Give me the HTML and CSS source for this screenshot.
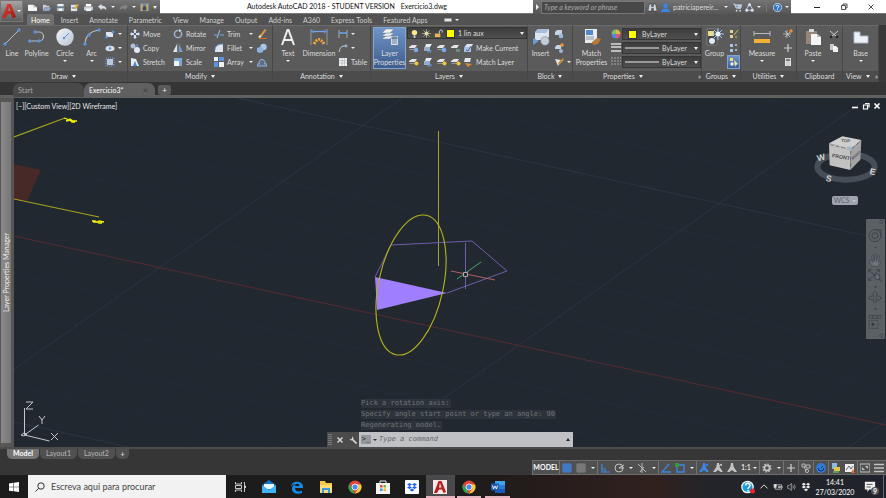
FILE: index.html
```html
<!DOCTYPE html>
<html lang="en">
<head>
<meta charset="utf-8">
<title>Autodesk AutoCAD 2018 - STUDENT VERSION</title>
<link rel="stylesheet" href="styles.css">
</head>
<body>
<svg class="defs" aria-hidden="true">
  <linearGradient id="ball" x1="0" y1="0" x2="1" y2="1"><stop offset="0" stop-color="#f2f5f9"/><stop offset="1" stop-color="#b9c3d3"/></linearGradient>
  <linearGradient id="red" x1="0" y1="0" x2="1" y2="1"><stop offset="0" stop-color="#e8443d"/><stop offset="1" stop-color="#a5120f"/></linearGradient>
  <symbol id="new" viewBox="0 0 10 10"><path d="M0 2h6l4 3V9H0z" fill="#f4f4f4"/><path d="M6 2v3h3" fill="#bbb"/></symbol>
  <symbol id="open" viewBox="0 0 10 10"><path d="M1 2h3l1 1h3v2H3L1 8z" fill="#c9cdd3"/><path d="M3 5h7L8 9H1z" fill="#8fa5c0"/></symbol>
  <symbol id="save" viewBox="0 0 10 10"><path d="M1 1h8v8H1z" fill="#9eb2ca"/><path d="M2 1h6v3H2zM3 6h4v3H3z" fill="#f1f1f1"/><path d="M1 4h8v1H1z" fill="#34465c"/></symbol>
  <symbol id="saveas" viewBox="0 0 10 10"><path d="M1 2h7v7H1z" fill="#dfe4ea"/><path d="M2 5h5v1H2z" fill="#50647c"/><path d="M4 6l4-5 2 1-4 5z" fill="#e8a23c"/></symbol>
  <symbol id="print" viewBox="0 0 10 10"><path d="M2 1h6v3H2z" fill="#fff"/><path d="M0 4h10v4H0z" fill="#c6cbd2"/><path d="M2 6h6v3H2z" fill="#edf2f8"/></symbol>
  <symbol id="undo" viewBox="0 0 10 10"><path d="M0 4l4-3v2c4 0 6 2 5 5-1-2-2-2-5-2v2z" fill="#d7dde5"/></symbol>
  <symbol id="redo" viewBox="0 0 10 10"><path d="M10 4L6 1v2C2 3 0 5 1 8c1-2 2-2 5-2v2z" fill="#858585"/></symbol>
  <symbol id="work" viewBox="0 0 10 10"><path d="M0 0h10v9H0z" fill="#7289a5"/><path d="M1 1h2v8H1zM7 1h2v8H7z" fill="#d3a54c"/><path d="M3 8V5l2-2 2 2v3" fill="#3f4e62"/></symbol>
  <symbol id="bino" viewBox="0 0 10 10"><path d="M1 3l1-2h2v3h2V1h2l1 2 1 6H6V6H4v3H0z" fill="#cfd5dd" stroke="#222" stroke-width=".5"/></symbol>
  <symbol id="user" viewBox="0 0 10 10"><circle cx="5" cy="3" r="2.500" fill="#3f83e6"/><path d="M0 10c0-3 2-4 5-4s5 1 5 4z" fill="#3d83e3"/></symbol>
  <symbol id="cart" viewBox="0 0 10 10"><path d="M0 1h2l2 5h5M2 2h8L9 5H3z" fill="#b4cbe8" stroke="#c9d9ec" stroke-width=".7"/><circle cx="4" cy="8.500" r="1" fill="#ddd"/><circle cx="8" cy="8.500" r="1" fill="#ddd"/></symbol>
  <symbol id="a360" viewBox="0 0 10 10"><path d="M5 1L1 8h8z" fill="none" stroke="#a9bddb" stroke-width="1.200"/><g fill="#d5dfee"><circle cx="5" cy="2" r="1.700"/><circle cx="2" cy="8" r="1.700"/><circle cx="8" cy="8" r="1.700"/></g></symbol>
  <symbol id="help" viewBox="0 0 10 10"><circle cx="5" cy="5" r="4.600" fill="#3271c4" stroke="#eee" stroke-width=".8"/><path d="M3.500 4c0-2 3-2 3 0 0 1-1.500 1-1.500 2.300M5 7v1" fill="none" stroke="#fff" stroke-width="1.100"/></symbol>
  <symbol id="line" viewBox="0 0 18 18"><path d="M2 16L16 2" stroke="#b9bec6"/><g fill="#5d93dd"><circle cx="2" cy="16" r="1.700"/><circle cx="16" cy="2" r="1.700"/></g></symbol>
  <symbol id="poly" viewBox="0 0 18 18"><path d="M1 13h10a4.500 4.500 0 0 0 0-9H7" fill="none" stroke="#b9bec6" stroke-width="1.200"/><g fill="#5d93dd"><circle cx="1.700" cy="13" r="1.700"/><circle cx="11" cy="13" r="1.700"/><circle cx="7" cy="4" r="1.700"/></g></symbol>
  <symbol id="circ" viewBox="0 0 18 18"><circle cx="9" cy="9" r="8.700" fill="url(#ball)"/><path d="M8 10l5-5" stroke="#5d93dd"/><circle cx="8" cy="10" r="1.200" fill="#5d93dd"/></symbol>
  <symbol id="arc" viewBox="0 0 18 18"><path d="M2 17Q2 4 16 2" fill="none" stroke="#b9bec6" stroke-width="1.200"/><g fill="#5d93dd"><circle cx="2" cy="16" r="1.700"/><circle cx="6" cy="7" r="1.700"/><circle cx="16" cy="2" r="1.700"/></g></symbol>
  <symbol id="rect" viewBox="0 0 10 10"><path d="M1 3h7v5H1z" fill="#dfe5ee"/><circle cx="8" cy="3" r="1.500" fill="#5d93dd"/><circle cx="1.500" cy="8" r="1.500" fill="#5d93dd"/></symbol>
  <symbol id="ell" viewBox="0 0 10 10"><ellipse cx="5" cy="5.500" rx="4.500" ry="2.700" fill="#d9e0ea"/><circle cx="5" cy="5.500" r="1.200" fill="#5d93dd"/><circle cx="5" cy="2.500" r="1" fill="#5d93dd"/></symbol>
  <symbol id="hatch" viewBox="0 0 10 10"><path d="M1 1h8v8H1z" fill="none" stroke="#79a4dd" stroke-dasharray="1 1"/><path d="M2 2h6v6H2z" fill="#b8c7dc"/></symbol>
  <symbol id="move" viewBox="0 0 10 10"><path d="M5 0l2 2H6v2h2V3l2 2-2 2V6H6v2h1l-2 2-2-2h1V6H2v1L0 5l2-2v1h2V2H3z" fill="#d5e2f2"/><path d="M4 4h2v2H4z" fill="#4f5f74"/></symbol>
  <symbol id="copy" viewBox="0 0 10 10"><circle cx="3" cy="3" r="2.500" fill="#aebfd6"/><circle cx="7" cy="7" r="3" fill="#e3eaf3"/><circle cx="7" cy="2.500" r="1.200" fill="#5d93dd"/></symbol>
  <symbol id="stretch" viewBox="0 0 10 10"><path d="M1 1l5 1 3 7H1z" fill="#e6ebf2"/><path d="M3 9l2-5 2 5z" fill="#4687d4"/></symbol>
  <symbol id="rotate" viewBox="0 0 10 10"><circle cx="5" cy="5" r="3.600" fill="none" stroke="#9fb6d3" stroke-width="1.500" stroke-dasharray="17 3"/><path d="M6 0l3 2-3 1z" fill="#d9e2ee"/></symbol>
  <symbol id="mirror" viewBox="0 0 10 10"><path d="M4 1v8H0z" fill="#e0e5ed"/><path d="M6 1v8h4z" fill="#6c9bd4"/><path d="M5 0v10" stroke="#aaa" stroke-width=".5"/></symbol>
  <symbol id="scale" viewBox="0 0 10 10"><path d="M1 1h8v8H1z" fill="#80a6d6"/><path d="M1 4h5v5H1z" fill="#eef2f7"/></symbol>
  <symbol id="trim" viewBox="0 0 10 10"><path d="M0 6h3m3 0h4" stroke="#7aa7df" stroke-width="1.200"/><path d="M6 1L3 9" stroke="#8cb1e0" stroke-width="1.200"/></symbol>
  <symbol id="fillet" viewBox="0 0 10 10"><path d="M1 9V6q1-5 8-5v8z" fill="#dfe5ed"/><path d="M1 7q0-6 8-6" fill="none" stroke="#6b9cda"/></symbol>
  <symbol id="array" viewBox="0 0 10 10"><path d="M0 0h4v4H0zM5 5h5v5H5z" fill="#eaf1f9"/><path d="M5 0h5v4H5zM0 5h4v5H0z" fill="#5d93dd"/></symbol>
  <symbol id="erase" viewBox="0 0 10 10"><path d="M3 6l5-6 1.500 1L5 7z" fill="#e4963a"/><path d="M1 8l2-2 2 1-2 2z" fill="#efe3c7"/><path d="M2 9.500h8" stroke="#d66b32"/></symbol>
  <symbol id="explode" viewBox="0 0 10 10"><circle cx="6.500" cy="4" r="3.200" fill="#a9c6e8"/><path d="M0 5l3-1 3 1v4l-3 1-3-1z" fill="#8eb3e0"/></symbol>
  <symbol id="offset" viewBox="0 0 10 10"><path d="M0 9V7h2.500a3 3 0 1 1 5 0H10v2z" fill="#5f7086" stroke="#8fb0dc"/></symbol>
  <symbol id="dim" viewBox="0 0 18 18"><path d="M1 1v16M17 1v16" stroke="#a5a8ad" stroke-width=".8"/><path d="M1 3.500h16" stroke="#78a6e2" stroke-width="1.300"/><path d="M1 3.500l3-2v4zM17 3.500l-3-2v4z" fill="#5d93dd"/><path d="M4 16q5-9 10 0" fill="none" stroke="#f0a43a" stroke-width="3" stroke-dasharray="2 1"/></symbol>
  <symbol id="dimlin" viewBox="0 0 10 10"><path d="M1 1v8M9 1v8" stroke="#aaa"/><path d="M1 4h8" stroke="#6ca0e2" stroke-width="1.600"/></symbol>
  <symbol id="leader" viewBox="0 0 10 10"><path d="M1 9q1-6 5-6h3" fill="none" stroke="#c5cbd4"/><circle cx="8" cy="3" r="1.400" fill="#8eb3e0"/></symbol>
  <symbol id="table" viewBox="0 0 10 10"><path d="M1 1h8v8H1z" fill="#eee"/><path d="M1 3.500h8M1 6h8M4 1v8M6.500 1v8" stroke="#a3a8b0" stroke-width=".5"/></symbol>
  <symbol id="layers" viewBox="0 0 18 18"><g stroke="#657f9f" stroke-width=".5" fill="#f3f3f3"><path d="M1 11l4-3h8l-4 3z"/><path d="M1 8l4-3h8L9 8z"/><path d="M1 5l4-4h8L9 5z"/></g><path d="M10 8h7v9h-7z" fill="#d9dde3"/><path d="M11 9h5v2h-5zM11 13h5M11 15h5" fill="#7c8ca1" stroke="#6682a5"/></symbol>
  <symbol id="lay" viewBox="0 0 10 10"><path d="M0 4l3-2h5L6 5H0z" fill="#e2e5e9"/><path d="M0 6l6 0 2-2v1L6 7H1z" fill="#8f959e"/><circle cx="7" cy="7" r="2.300" fill="#7fa9de"/></symbol>
  <symbol id="layy" viewBox="0 0 10 10"><path d="M0 4l3-2h5L6 5H0z" fill="#e2e5e9"/><path d="M0 6l6 0 2-2v1L6 7H1z" fill="#8f959e"/><circle cx="7.500" cy="6.500" r="2" fill="#f4c43e"/></symbol>
  <symbol id="layb" viewBox="0 0 10 10"><path d="M3 1h6L7 4H2z" fill="#e8ecf1"/><path d="M1 4h6v4H1z" fill="#96abc5"/><path d="M4 9h4V7" fill="none" stroke="#5e9bdd"/></symbol>
  <symbol id="layg" viewBox="0 0 10 10"><path d="M0 4l3-2h5L6 5H0z" fill="#e2e5e9"/><path d="M5 6h4v3H5z" fill="#6b8e8d"/></symbol>
  <symbol id="layk" viewBox="0 0 10 10"><path d="M2 3l2-2h6L8 4v5H1V5z" fill="#a9bfdd"/><path d="M4 1h6L8 4H2z" fill="#dbe5f2"/><path d="M3 7l2 1 3-5" fill="none" stroke="#3f6ea9"/></symbol>
  <symbol id="layo" viewBox="0 0 10 10"><path d="M2 1h6L7 5H1z" fill="#e2e5e9"/><path d="M2 6l7 1-4 3z" fill="#dd8b35"/></symbol>
  <symbol id="bulb" viewBox="0 0 10 10"><circle cx="5" cy="4" r="3" fill="#ffe48a"/><path d="M4 7h2v3H4z" fill="#ccc"/></symbol>
  <symbol id="sun" viewBox="0 0 10 10"><circle cx="5" cy="5" r="2.200" fill="#f7e7a4"/><path d="M5 0v10M0 5h10M1.500 1.500l7 7M8.500 1.500l-7 7" stroke="#d5cfae" stroke-width=".7"/></symbol>
  <symbol id="lock" viewBox="0 0 10 10"><path d="M1 5h6v4H1z" fill="#e4b64e"/><path d="M6 5V3q0-2 2-2t1 3" fill="none" stroke="#d9dce0"/></symbol>
  <symbol id="insert" viewBox="0 0 18 18"><path d="M3 4l3-3h11v8l-3 3H3z" fill="#dce4ef"/><path d="M6 1h11l-3 4H3z" fill="#a7bddb"/><path d="M1 10l6 3-6 4z" fill="#6b9cda"/><circle cx="13" cy="13" r="4.300" fill="#c4ccd8" stroke="#747f8e" stroke-width=".6"/></symbol>
  <symbol id="blk" viewBox="0 0 10 10"><path d="M1 3l2-2h5v5H1z" fill="#c3d3e8"/><circle cx="7" cy="7" r="2.300" fill="#9eb8da"/></symbol>
  <symbol id="blke" viewBox="0 0 10 10"><path d="M1 4l2-2h4v4H1z" fill="#c3d3e8"/><circle cx="7" cy="8" r="2" fill="#9eb8da"/><path d="M8 0l.7 1.500L10 2l-1.300.7L8 4l-.7-1.300L6 2l1.300-.5z" fill="#f0a040" stroke="#f0a040" stroke-width=".6"/></symbol>
  <symbol id="attr" viewBox="0 0 10 10"><path d="M1 2l6 1-3 6z" fill="#e4e4e4"/><path d="M4 6l5-5 1 2-5 5z" fill="#ca8b45"/></symbol>
  <symbol id="match" viewBox="0 0 18 18"><path d="M2 1h12v14H2z" fill="#e8eaee"/><path d="M3 2h7v5H3z" fill="#508bd0"/><path d="M3 9h8M3 11h8" stroke="#8d98a8"/><path d="M9 14l5-4 4 1-3 5-5 1z" fill="#b77a38"/></symbol>
  <symbol id="wheel" viewBox="0 0 10 10"><path d="M5 5V.5A4.500 4.500 0 0 1 9.500 5z" fill="#e5b93f"/><path d="M5 5h4.500A4.500 4.500 0 0 1 5 9.500z" fill="#d85a77"/><path d="M5 5v4.500A4.500 4.500 0 0 1 .5 5z" fill="#4f8bd8"/><path d="M5 5H.5A4.500 4.500 0 0 1 5 .5z" fill="#7fc070"/></symbol>
  <symbol id="lwt" viewBox="0 0 10 10"><path d="M0 1h10M0 4h10M0 8h10" stroke="#ddd" stroke-width="1.700"/></symbol>
  <symbol id="ltp" viewBox="0 0 10 10"><path d="M0 1h10M0 4h10M0 7h10" stroke="#aaa" stroke-width="1.200" stroke-dasharray="2 1"/></symbol>
  <symbol id="group" viewBox="0 0 18 18"><path d="M1 1h10v16H1z" fill="#474747" stroke="#858585" stroke-width=".8"/><path d="M2 3h6v5H2z" fill="#e9dc8b"/><circle cx="6" cy="13" r="3" fill="#e3eef5"/><path d="M12 0v12M6 6h12M8 2l8 8M16 2l-8 8" stroke="#9ccaf6"/><circle cx="12" cy="6" r="2.500" fill="#e8f5ff"/></symbol>
  <symbol id="grp" viewBox="0 0 10 10"><path d="M1 1h3v3H1zM1 6h3v3H1z" fill="#e4d58b"/><path d="M5 6l4-5M6 8h2" stroke="#d6b75a"/></symbol>
  <symbol id="grp2" viewBox="0 0 10 10"><path d="M1 1h3v3H1zM1 6h3v3H1z" fill="#a9c6ea"/><path d="M6 2h2M6 7h2" stroke="#9fb6d3" stroke-width="2"/></symbol>
  <symbol id="grp3" viewBox="0 0 10 10"><path d="M1 1h3v3H1z" fill="#f2dc73"/><circle cx="3" cy="7" r="1.700" fill="#e7f1fd"/><path d="M5 3l4 4-2 1-1 2z" fill="#f3e9a0"/></symbol>
  <symbol id="measure" viewBox="0 0 18 18"><path d="M1 3v5M17 3v5M1 5.500h16" stroke="#b8bcc2" fill="none"/><path d="M1 11h16v4H1z" fill="#f2b236"/></symbol>
  <symbol id="spark" viewBox="0 0 10 10"><path d="M4 1v8M0 5h8M2 2l5 6M7 3L2 8" stroke="#c9c9c9" stroke-width=".8"/><circle cx="8" cy="2" r="1.700" fill="#e8913e"/></symbol>
  <symbol id="plus" viewBox="0 0 10 10"><path d="M5 1v8M1 5h8" stroke="#d0d0d0" stroke-width="1.200"/></symbol>
  <symbol id="calc" viewBox="0 0 10 10"><path d="M2 1h6v8H2z" fill="#e6e6e6"/><path d="M3 2h4v2H3zM3 6h4M3 8h4" fill="#777" stroke="#888" stroke-width=".5"/></symbol>
  <symbol id="paste" viewBox="0 0 18 18"><path d="M2 3h11v13H2z" fill="#948779"/><path d="M5 1h5v3H5z" fill="#d7d7d7"/><path d="M7 6h6l4 3v8H7z" fill="#f4f4f4"/><path d="M13 6v3h4" fill="#bbb"/></symbol>
  <symbol id="cut" viewBox="0 0 10 10"><path d="M1 2l7 6M9 2L2 8" stroke="#d0d0d0"/><circle cx="2" cy="8" r="1.300" fill="#252525"/><circle cx="8" cy="8" r="1.300" fill="#252525"/></symbol>
  <symbol id="clip" viewBox="0 0 10 10"><path d="M1 1h4v6H1z" fill="#c9c9c9"/><path d="M4 3h3l2 2v4H4z" fill="#f4f4f4"/></symbol>
  <symbol id="base" viewBox="0 0 18 18"><path d="M2 4h6v4h8v7H2z" fill="#eef1f5" stroke="#a9b7ca"/></symbol>
  <symbol id="griddots" viewBox="0 0 10 10"><path d="M1 1h8v8H1zM3 1v8M5 1v8M7 1v8M1 3h8M1 5h8M1 7h8" fill="none" stroke="currentColor"/></symbol>
  <symbol id="ortho" viewBox="0 0 10 10"><path d="M2 1v8h8M2 6h3v3" fill="none" stroke="currentColor" stroke-width="1.200"/></symbol>
  <symbol id="polar" viewBox="0 0 10 10"><circle cx="5" cy="5" r="4" fill="none" stroke="currentColor"/><path d="M10 2L5 5h5" fill="none" stroke="currentColor" /></symbol>
  <symbol id="iso" viewBox="0 0 10 10"><path d="M1 1l8 8M5 0v10M3 9l4-5" stroke="currentColor" fill="none" stroke-width=".9"/></symbol>
  <symbol id="track" viewBox="0 0 10 10"><path d="M8 1L1 9h9" fill="none" stroke="currentColor" stroke-width="1.300"/></symbol>
  <symbol id="osnap" viewBox="0 0 10 10"><path d="M2 2h7v7H2z" fill="none" stroke="currentColor" stroke-width="1.300"/><path d="M0 0h4v4H0z" fill="#2e9c3d"/></symbol>
  <symbol id="ann" viewBox="0 0 10 10"><path d="M4 0h2l.7 4L10 9H7.500L5 7 2.500 9H0l3.300-5z" fill="currentColor"/></symbol>
  <symbol id="annp" viewBox="0 0 10 10"><path d="M4 0h2l.7 4L10 9H7.500L5 7 2.500 9H0l3.300-5z" fill="currentColor"/><path d="M6 3l3-2M7 1l2 2" stroke="currentColor"/></symbol>
  <symbol id="gear" viewBox="0 0 10 10"><circle cx="5" cy="5" r="2.600" fill="none" stroke="currentColor" stroke-width="1.800"/><circle cx="5" cy="5" r="4" fill="none" stroke="currentColor" stroke-width="1.200" stroke-dasharray="1.600 1.500"/></symbol>
  <symbol id="isol" viewBox="0 0 10 10"><path d="M1 1h3v3H1zM5 2h4v3H5zM3 4l2 4" fill="none" stroke="currentColor" stroke-width=".9"/><circle cx="6" cy="8" r="1.600" fill="none" stroke="currentColor" stroke-width=".9"/></symbol>
  <symbol id="perf" viewBox="0 0 10 10"><circle cx="5" cy="5" r="5" fill="#2f7bd6"/><path d="M2 5a3 3 0 0 0 6 0M5 5l2-2" fill="none" stroke="#15365f"/></symbol>
  <symbol id="flag" viewBox="0 0 10 10"><path d="M1 0h5v6H1z" fill="#8eb7e2"/><path d="M3 4h6v4H3z" fill="#e3c54b"/><path d="M2 8h6v2H2z" fill="#5b9b5a"/></symbol>
  <symbol id="graph" viewBox="0 0 10 10"><path d="M0 1h9v8H0z" fill="#ececec"/><path d="M1 7l3-4 2 3 2-3" fill="none" stroke="#444" stroke-width=".8"/><path d="M8 6l2 4H6z" fill="#e36b2d"/></symbol>
  <symbol id="clean" viewBox="0 0 10 10"><path d="M0 1h10v8H0z" fill="none" stroke="currentColor"/><path d="M2 7V4l3 3zM8 3v3L5 3z" fill="currentColor"/></symbol>
  <symbol id="bars" viewBox="0 0 10 10"><path d="M0 1.500h10M0 5h10M0 8.500h10" stroke="currentColor" stroke-width="1.400"/></symbol>
  <symbol id="chrome" viewBox="0 0 14 14"><circle cx="7" cy="7" r="6.500" fill="#e0453a"/><path d="M1.400 3.700L5 10l1.500 3.500A6.500 6.500 0 0 1 1.400 3.700z" fill="#2fa452"/><path d="M13 4.500H7l3.500 4L7 13.500A6.500 6.500 0 0 0 13 4.500z" fill="#f7cc3c"/><circle cx="7" cy="7" r="3" fill="#4a88ea" stroke="#fff" stroke-width=".8"/></symbol>
  <symbol id="drop" viewBox="0 0 14 14"><path d="M4 1l3 2-3 2-3-2zM10 1l3 2-3 2-3-2zM4 5l3 2-3 2-3-2zM10 5l3 2-3 2-3-2zM7 9l3 2-3 2-3-2z" fill="currentColor"/></symbol>
</svg>

<div class="head">
  <button class="app" aria-label="Application menu"><svg viewBox="0 0 16 18"><path d="M0 17L6 1h4l6 15-4 1-2-5H7l-3 5zM7 9h3L8 4z" fill="url(#red)"/></svg><i class="arr"></i></button>
  <div class="headmain">
    <header class="title">
      <div class="qat">
        <button aria-label="New"><svg><use href="#new"/></svg></button><button aria-label="Open"><svg><use href="#open"/></svg></button><button aria-label="Save"><svg><use href="#save"/></svg></button><button aria-label="Save as"><svg><use href="#saveas"/></svg></button><button aria-label="Plot"><svg><use href="#print"/></svg></button><button aria-label="Undo"><svg><use href="#undo"/></svg></button><button class="slim" aria-label="Undo list"><i class="arr"></i></button><button aria-label="Redo"><svg><use href="#redo"/></svg></button><button class="slim" aria-label="Redo list"><i class="arr"></i></button><button aria-label="Workspace"><svg><use href="#work"/></svg></button><button class="slim" aria-label="Customize"><i class="arr wide"></i></button>
      </div>
      <h1><span>Autodesk AutoCAD 2018 - STUDENT VERSION</span><span>Exercicio3.dwg</span></h1>
      <div class="info">
        <button class="expand" aria-label="Collapse search"><i class="rarr"></i></button>
        <input type="search" aria-label="Search" placeholder="Type a keyword or phrase">
        <button aria-label="Find"><svg><use href="#bino"/></svg></button>
        <button class="account"><svg><use href="#user"/></svg><span>patriciapereir...</span><i class="arr"></i></button>
        <button aria-label="Store"><svg><use href="#cart"/></svg></button>
        <button class="pair" aria-label="Connect"><svg><use href="#a360"/></svg><i class="arr"></i></button>
        <button class="pair helpb" aria-label="Help"><svg><use href="#help"/></svg><i class="arr"></i></button>
      </div>
      <div class="win">
        <button aria-label="Minimize"><svg viewBox="0 0 8 8"><path d="M1 4.500h6" stroke="#222"/></svg></button>
        <button aria-label="Restore"><svg viewBox="0 0 8 8"><path d="M1.500 2.500h4v4h-4zM3 2V1h4v4H6" fill="none" stroke="#222" stroke-width=".8"/></svg></button>
        <button aria-label="Close"><svg viewBox="0 0 8 8"><path d="M1.500 1.500l5 5M6.500 1.500l-5 5" stroke="#222" stroke-width=".8"/></svg></button>
      </div>
    </header>
    <nav class="menu">
      <a class="on" href="#">Home</a><a href="#">Insert</a><a href="#">Annotate</a><a href="#">Parametric</a><a href="#">View</a><a href="#">Manage</a><a href="#">Output</a><a href="#">Add-ins</a><a href="#">A360</a><a href="#">Express Tools</a><a href="#">Featured Apps</a>
      <button aria-label="Ribbon display"><b class="pill"></b><i class="arr"></i></button>
    </nav>
  </div>
</div>

<main class="ribbon">
  <section class="panel">
    <div class="tools draw">
      <button class="big"><svg><use href="#line"/></svg>Line</button>
      <button class="big"><svg><use href="#poly"/></svg>Polyline</button>
      <button class="big"><svg><use href="#circ"/></svg>Circle<i class="arr"></i></button>
      <button class="big"><svg><use href="#arc"/></svg>Arc<i class="arr"></i></button>
      <div class="col"><button class="sm" aria-label="Rectangle"><svg><use href="#rect"/></svg><i class="arr"></i></button><button class="sm" aria-label="Ellipse"><svg><use href="#ell"/></svg><i class="arr"></i></button><button class="sm" aria-label="Hatch"><svg><use href="#hatch"/></svg><i class="arr"></i></button></div>
    </div>
    <h2>Draw<i class="arr wide"></i></h2>
  </section>
  <section class="panel">
    <div class="tools modify">
      <div class="col"><button class="sm"><svg><use href="#move"/></svg>Move</button><button class="sm"><svg><use href="#copy"/></svg>Copy</button><button class="sm"><svg><use href="#stretch"/></svg>Stretch</button></div>
      <div class="col"><button class="sm"><svg><use href="#rotate"/></svg>Rotate</button><button class="sm"><svg><use href="#mirror"/></svg>Mirror</button><button class="sm"><svg><use href="#scale"/></svg>Scale</button></div>
      <div class="col end"><button class="sm"><svg><use href="#trim"/></svg>Trim<i class="arr"></i></button><button class="sm"><svg><use href="#fillet"/></svg>Fillet<i class="arr"></i></button><button class="sm"><svg><use href="#array"/></svg>Array<i class="arr"></i></button></div>
      <div class="col"><button class="sm" aria-label="Erase"><svg><use href="#erase"/></svg></button><button class="sm" aria-label="Explode"><svg><use href="#explode"/></svg></button><button class="sm" aria-label="Offset"><svg><use href="#offset"/></svg></button></div>
    </div>
    <h2>Modify<i class="arr wide"></i></h2>
  </section>
  <section class="panel">
    <div class="tools annot">
      <button class="big"><svg viewBox="0 0 18 18"><path d="M3 17L8.500 2h1L15 17M5 12h8" fill="none" stroke="#eee" stroke-width="2"/></svg>Text<i class="arr"></i></button>
      <button class="big"><svg><use href="#dim"/></svg>Dimension</button>
      <div class="col"><button class="sm" aria-label="Linear"><svg><use href="#dimlin"/></svg><i class="arr"></i></button><button class="sm" aria-label="Leader"><svg><use href="#leader"/></svg><i class="arr"></i></button><button class="sm"><svg><use href="#table"/></svg>Table</button></div>
    </div>
    <h2>Annotation<i class="arr wide"></i></h2>
  </section>
  <section class="panel">
    <div class="tools layers">
      <button class="big sel"><svg><use href="#layers"/></svg>Layer<br>Properties</button>
      <div class="col">
        <label class="combo"><svg><use href="#bulb"/></svg><svg><use href="#sun"/></svg><svg><use href="#lock"/></svg><b class="sw"></b><select aria-label="Layer"><option>1 lin aux</option></select></label>
        <div class="row"><button aria-label="Off"><svg><use href="#lay"/></svg></button><button aria-label="Isolate"><svg><use href="#layb"/></svg></button><button aria-label="Freeze"><svg><use href="#lay"/></svg></button><button aria-label="Lock"><svg><use href="#layg"/></svg></button><button class="sm"><svg><use href="#layk"/></svg>Make Current</button></div>
        <div class="row"><button aria-label="On"><svg><use href="#layy"/></svg></button><button aria-label="Unisolate"><svg><use href="#layb"/></svg></button><button aria-label="Thaw"><svg><use href="#layy"/></svg></button><button aria-label="Unlock"><svg><use href="#layy"/></svg></button><button class="sm"><svg><use href="#layo"/></svg>Match Layer</button></div>
      </div>
    </div>
    <h2>Layers<i class="arr wide"></i></h2>
  </section>
  <section class="panel">
    <div class="tools block">
      <button class="big"><svg><use href="#insert"/></svg>Insert</button>
      <div class="col"><button class="sm" aria-label="Create"><svg><use href="#blk"/></svg></button><button class="sm" aria-label="Edit"><svg><use href="#blke"/></svg></button><button class="sm" aria-label="Attributes"><svg><use href="#attr"/></svg><i class="arr"></i></button></div>
    </div>
    <h2>Block<i class="arr wide"></i></h2>
  </section>
  <section class="panel">
    <div class="tools props">
      <button class="big"><svg><use href="#match"/></svg>Match<br>Properties</button>
      <div class="col">
        <div class="prow"><svg><use href="#wheel"/></svg><label class="combo"><b class="sw"></b><select aria-label="Color"><option>ByLayer</option></select></label></div>
        <div class="prow"><svg><use href="#lwt"/></svg><label class="combo"><b class="ln"></b><select aria-label="Lineweight"><option>ByLayer</option></select></label></div>
        <div class="prow"><svg><use href="#ltp"/></svg><label class="combo"><b class="ln"></b><select aria-label="Linetype"><option>ByLayer</option></select></label></div>
      </div>
    </div>
    <h2>Properties<i class="arr wide"></i><em>»</em></h2>
  </section>
  <section class="panel">
    <div class="tools groups">
      <button class="big"><svg><use href="#group"/></svg>Group</button>
      <div class="col"><button class="sm" aria-label="Ungroup"><svg><use href="#grp"/></svg></button><button class="sm" aria-label="Group edit"><svg><use href="#grp2"/></svg></button><button class="sm sel" aria-label="Group selection"><svg><use href="#grp3"/></svg></button></div>
    </div>
    <h2>Groups<i class="arr wide"></i></h2>
  </section>
  <section class="panel">
    <div class="tools utils">
      <button class="big"><svg><use href="#measure"/></svg>Measure<i class="arr"></i></button>
      <div class="col"><button class="sm" aria-label="Quick select"><svg><use href="#spark"/></svg></button><button class="sm" aria-label="Point"><svg><use href="#plus"/></svg></button><button class="sm" aria-label="Calculator"><svg><use href="#calc"/></svg></button></div>
    </div>
    <h2>Utilities<i class="arr wide"></i></h2>
  </section>
  <section class="panel">
    <div class="tools clipb">
      <button class="big"><svg><use href="#paste"/></svg>Paste<i class="arr"></i></button>
      <div class="col"><button class="sm" aria-label="Cut"><svg><use href="#cut"/></svg></button><button class="sm" aria-label="Copy clip"><svg><use href="#clip"/></svg></button></div>
    </div>
    <h2>Clipboard</h2>
  </section>
  <section class="panel">
    <div class="tools view">
      <button class="big"><svg><use href="#base"/></svg>Base<i class="arr"></i></button>
    </div>
    <h2>View<i class="arr wide"></i><em>»</em></h2>
  </section>
  <div class="rest"></div>
</main>

<nav class="files">
  <a class="start" href="#">Start</a><a class="on" href="#">Exercicio3*<svg viewBox="0 0 8 8"><path d="M1 1l6 6M7 1L1 7" stroke="#3c3c3c" stroke-width="1.500"/></svg></a><button aria-label="New tab">+</button>
</nav>

<div class="work">
  <aside class="dock"><span>Layer Properties Manager</span></aside>
  <div class="canvas">
    <svg class="drawing" viewBox="14 98 872 349" preserveAspectRatio="xMinYMin slice">
      <g stroke="#252c35" stroke-width="1">
        <path d="M-470 447L29 98M-377 447L122 98M-283 447L216 98M-190 447L309 98M-4 447L495 98M89 447L588 98M183 447L682 98M276 447L775 98M465 447L964 98M561 447L1060 98M657 447L1156 98M753 447L1252 98"/>
        <path d="M14-63L886 126M14-26L886 163M14 11L886 200M14 86L886 275M14 124L886 313M14 161L886 350M14 199L886 388M14 274L886 463M14 311L886 500M14 349L886 538M14 386L886 575"/>
      </g>
      <path d="M-97 447L402 98M375 447L868 98M849 447L900 411M14 49L886 240M14 422L886 611" stroke="#2d3440"/>
      <path d="M14 236L886 425" stroke="#552a31"/>
      <path d="M14 164l27 6-14 31-13-2z" fill="#472a28"/>
      <g fill="none" stroke="#a3a31d" stroke-width="1.200">
        <path d="M14 137l51-19M14 199l85 18"/>
        <path d="M438.500 131v135" stroke-width="1"/>
      </g>
      <path d="M64 118l3 1 1 1 2-1 3 2 4 0M66 121l4-1 2 2 3 0M92 221l3 0 2 1 2-1 5 1M93 222l4 0 2 1 3 0" fill="none" stroke="#f2f20a" stroke-width="1.300"/>
      <g fill="none" stroke="#6f5eac">
        <path d="M375 277l16-32 81-4 35 30-60 22"/>
        <path d="M465.500 243v46"/>
      </g>
      <path d="M375 277l72 16-70 17z" fill="#a07fff"/>
      <ellipse cx="411" cy="285" rx="32.300" ry="71.300" transform="rotate(12.300 411 285)" fill="none" stroke="#b4b31c" stroke-width="1.100"/>
      <path d="M451 271l44 9" stroke="#b25f66"/>
      <path d="M457 279l24-17" stroke="#4fa566"/>
      <path d="M463.500 272.500h4v4h-4z" fill="#212830" stroke="#c8c8c8" stroke-width=".8"/>
      <g fill="none" stroke="#c4c7cb">
        <path d="M24.500 435v-27M24.500 435l14-10M24.500 435l25 6M21 435l3 1 3-2-3-1z"/>
        <path d="M26 402h7l-7 7h7M39 416l3 4 3-4M42 420v4M51 433l7 7M58 433l-7 7"/>
      </g>
    </svg>
    <div class="viewlabel">[−][Custom View][2D Wireframe]</div>
    <div class="docwin">
      <button aria-label="Minimize drawing"><svg viewBox="0 0 8 8"><path d="M1 5.500h6" stroke="#fff" stroke-width="1.600"/></svg></button>
      <button aria-label="Restore drawing"><svg viewBox="0 0 8 8"><path d="M1.500 3h4v4h-4zM3 1.500h4v4" fill="none" stroke="#fff" stroke-width="1.200"/></svg></button>
      <button aria-label="Close drawing"><svg viewBox="0 0 8 8"><path d="M1.500 1.500l5 5M6.500 1.500l-5 5" stroke="#fff" stroke-width="1.600"/></svg></button>
    </div>
    <svg class="cube" viewBox="215 115 204 156">
      <ellipse cx="317" cy="216" rx="86" ry="39" fill="none" stroke="#484e57" stroke-width="18"/>
      <path d="M266 146l40-21 57 11-31 28z" fill="#cfcfcf"/>
      <path d="M266 146l66 16-2 64-62-14z" fill="#c2c2c2"/>
      <path d="M332 162l31-26-3 59-30 31z" fill="#a4a4a4"/>
      <path d="M268 150l62 14M331 168v54M334 162l28-24" stroke="#555" stroke-width="2" stroke-dasharray="12 6" fill="none"/>
      <path d="M320 156h14v10h-14z" fill="#9fb9c9"/>
      <g font-family="Liberation Sans, sans-serif" font-weight="bold" fill="#4b4f55">
        <text x="274" y="188" font-size="16" transform="rotate(9 274 188)">FRONT</text>
        <text x="302" y="141" font-size="13" transform="rotate(6 302 141)">TOP</text>
        <text x="337" y="196" font-size="11" transform="rotate(-42 337 196)">RIGHT</text>
        <g font-size="26" fill="#d0d2d5"><text x="232" y="200" transform="rotate(-14 232 200)">W</text><text x="255" y="258" transform="rotate(14 255 258)">S</text><text x="387" y="238" transform="rotate(12 387 238)">E</text></g>
      </g>
    </svg>
    <button class="wcs">WCS<i class="arr"></i></button>
    <svg class="navbar" viewBox="378 372 57 360">
      <rect x="379" y="373" width="55" height="358" rx="3" fill="#5b6065" stroke="#6c7176" stroke-width="2"/>
      <g fill="none" stroke="#3d434b" stroke-width="3">
        <circle cx="424" cy="381" r="5" stroke-width="2"/><circle cx="424" cy="722" r="5" stroke-width="2"/>
        <circle cx="405" cy="422" r="18"/><circle cx="405" cy="422" r="9"/><path d="M405 404h18v18"/>
        <path d="M394 512l-6-15 4-2 6 7-3-20 4 0 4 17 1-21h4l1 21 6-17 4 1-4 20 5-5 3 3-11 15z" fill="#6f747a" stroke-width="2"/>
        <path d="M386 524l34 32M418 524l-32 32M386 532v-8h8M410 524h8v8M386 548v8h8"/><circle cx="412" cy="546" r="8" fill="#686d73"/><path d="M418 552l8 9"/>
        <ellipse cx="405" cy="609" rx="19" ry="7"/><path d="M401 622v-26h-4l8-9 8 9h-4v26z" fill="#5b6065" stroke-width="2"/>
        <path d="M387 661h11v9h-11zM400 661h11v9h-11zM413 661h11v9h-11zM387 676h27v24h-27z" stroke-width="2"/>
      </g>
      <path d="M395 681l11 7-11 7zM402 455h9l-4 5zM402 574h9l-4 5zM402 640h9l-4 5z" fill="#363c44"/>
    </svg>
    <div class="command">
      <p><span>Pick a rotation axis:</span></p>
      <p><span>Specify angle start point or type an angle: 90</span></p>
      <p><span>Regenerating model.</span></p>
      <div class="cmdline">
        <b class="grip"></b>
        <button aria-label="Close command line"><svg viewBox="0 0 8 8"><path d="M1.500 1.500l5 5M6.500 1.500l-5 5" stroke="#ddd" stroke-width="1.300"/></svg></button>
        <button aria-label="Customize command line"><svg viewBox="0 0 8 8"><path d="M7.500 7.500L3.500 3.500" stroke="#ddd" stroke-width="1.600"/><path d="M3 .5A2 2 0 1 1 .5 3L2 3.500 3.300 2z" fill="#ddd"/></svg></button>
        <div class="entry"><button class="prompt" aria-label="Recent commands">&gt;_</button><i class="arr"></i><input type="text" aria-label="Command" placeholder="Type a command"><i class="up"></i></div>
      </div>
    </div>
  </div>
</div>

<footer class="bottom">
  <nav class="layouts"><a class="on" href="#">Model</a><a href="#">Layout1</a><a href="#">Layout2</a><button aria-label="New layout">+</button></nav>
  <div class="status">
    <button class="model">MODEL</button>
    <div class="seg"><button class="act" aria-label="Grid"><svg><use href="#griddots"/></svg></button><button class="dim" aria-label="Snap"><svg><use href="#griddots"/></svg></button><button class="slim" aria-label="Snap menu"><i class="arr"></i></button></div>
    <div class="seg"><button class="act" aria-label="Ortho"><svg><use href="#ortho"/></svg></button><button aria-label="Polar"><svg><use href="#polar"/></svg></button><button class="slim" aria-label="Polar menu"><i class="arr"></i></button><button aria-label="Isodraft"><svg><use href="#iso"/></svg></button><button class="slim" aria-label="Isodraft menu"><i class="arr"></i></button></div>
    <div class="seg"><button class="act" aria-label="Tracking"><svg><use href="#track"/></svg></button><button class="act" aria-label="Object snap"><svg><use href="#osnap"/></svg></button><button class="slim" aria-label="Object snap menu"><i class="arr"></i></button></div>
    <div class="seg"><button class="act" aria-label="Annotation visibility"><svg><use href="#annp"/></svg></button><button aria-label="Auto scale"><svg><use href="#annp"/></svg></button><button aria-label="Annotation scale"><svg><use href="#ann"/></svg></button><button class="ratio">1:1<i class="arr"></i></button></div>
    <div class="seg"><button aria-label="Workspace"><svg><use href="#gear"/></svg></button><button class="slim" aria-label="Workspace menu"><i class="arr"></i></button></div>
    <div class="seg"><button aria-label="Monitor"><svg><use href="#plus"/></svg></button></div>
    <div class="seg"><button aria-label="Isolate"><svg><use href="#isol"/></svg></button></div>
    <div class="seg"><button aria-label="Performance"><svg><use href="#perf"/></svg></button></div>
    <div class="seg"><button aria-label="Trusted"><svg><use href="#flag"/></svg></button><button aria-label="Graph"><svg><use href="#graph"/></svg></button></div>
    <div class="seg"><button aria-label="Clean screen"><svg><use href="#clean"/></svg></button><button aria-label="Customization"><svg><use href="#bars"/></svg></button></div>
  </div>
</footer>

<footer class="taskbar">
  <button class="winkey" aria-label="Start"><svg viewBox="0 0 10 10"><path d="M0 1.500l4.500-.7v4H0zM5 .7L10 0v4.800H5zM0 5.300h4.500v4L0 8.700zM5 5.300h5V10l-5-.7z" fill="#fff"/></svg></button>
  <label class="search"><svg viewBox="0 0 10 10"><circle cx="6" cy="4" r="3.200" fill="none" stroke="#333"/><path d="M3.700 6.300L.5 9.500" stroke="#333"/></svg><input type="text" aria-label="Search Windows" placeholder="Escreva aqui para procurar"></label>
  <div class="apps">
    <button aria-label="Task view"><svg viewBox="0 0 14 14"><path d="M2.500 2v2h6V2M2.500 12v-2h6v2M2.500 5.500h6v3h-6zM11.500 2v10M11 6h1.500v2" fill="none" stroke="#ddd" stroke-width=".9"/></svg></button>
    <button aria-label="Mail"><svg viewBox="0 0 14 14"><path d="M0 5l7-5 7 5v8H0z" fill="#1173c6"/><path d="M2 4h10v5H2z" fill="#eaf6ff"/><path d="M0 5l7 5 7-5v8H0z" fill="#3fb4f3"/></svg></button>
    <button aria-label="Edge"><svg viewBox="0 0 14 14"><path d="M1 7C1 0 13 0 13 7v1H5c0 4 5 4 7 2.500V13C7 15 2 13 2 9c0-2 1-4 3-5-3 0-4 3-4 3zm4-1h4.500C9.500 3 5 3 5 6z" fill="#1589e6"/></svg></button>
    <button aria-label="Explorer"><svg viewBox="0 0 14 14"><path d="M1 1h5l1 2h6v10H1z" fill="#f5c84c"/><path d="M1 5h12v8H1z" fill="#ffdc7a"/><path d="M3 13V8h8v5H9v-3H5v3z" fill="#3b9be0"/></svg></button>
    <button aria-label="Chrome"><svg><use href="#chrome"/></svg></button>
    <button aria-label="Store"><svg viewBox="0 0 14 14"><path d="M4 4V1h6v3" fill="none" stroke="#eee"/><path d="M0 3h14v11H0z" fill="#f4f4f4"/><path d="M4 5h2.500v2.500H4z" fill="#e94f2c"/><path d="M7.500 5H10v2.500H7.500z" fill="#74b62e"/><path d="M4 8.500h2.500V11H4z" fill="#2b9fe5"/><path d="M7.500 8.500H10V11H7.500z" fill="#f7b526"/></svg></button>
    <button class="dropbox" aria-label="Dropbox"><svg viewBox="0 0 14 14"><rect width="14" height="14" rx="1" fill="#fff"/><path d="M4.500 3L7 4.500 4.500 6 2 4.500zM9.500 3L12 4.500 9.500 6 7 4.500zM4.500 6L7 7.500 4.500 9 2 7.500zM9.500 6L12 7.500 9.500 9 7 7.500zM7 8.500L9.500 10 7 11.500 4.500 10z" fill="#1763e8"/></svg></button>
    <button class="open now" aria-label="AutoCAD"><svg viewBox="0 0 14 14"><path d="M0 0h14v14H0z" fill="#f7e7e6"/><path d="M1 13L5.500 1h3L13 12l-2.500 1L9 9.500H6L4 13zM6 7.500h2.500L7 3z" fill="#b3221f"/></svg></button>
    <button class="open" aria-label="Chrome window"><svg><use href="#chrome"/></svg></button>
    <button class="open" aria-label="Word"><svg viewBox="0 0 14 14"><path d="M4 1h10v12H4z" fill="#e8f0fa"/><path d="M4 1h10v4H4z" fill="#41a5ee"/><path d="M4 5h10v4H4z" fill="#2b7cd3"/><path d="M4 9h10v4H4z" fill="#185abd"/><path d="M0 3.500h8v7H0z" fill="#1c5cb8"/><path d="M1.500 5.500l1 3.500L4 6l1.500 3 1-3.500" fill="none" stroke="#fff" stroke-width=".9"/></svg></button>
  </div>
  <div class="tray">
    <button aria-label="Support"><svg viewBox="0 0 14 14"><circle cx="6.500" cy="7" r="6.300" fill="#f4fbff"/><circle cx="6.500" cy="7" r="5" fill="#1b9ad8"/><path d="M4.500 5.500c0-3 4.500-3 4.500 0C9 7 7 7 7 9M7 10v1.500" fill="none" stroke="#fff" stroke-width="1.500"/><circle cx="11.500" cy="11" r="2.500" fill="#e5252a"/></svg></button>
    <button aria-label="Hidden icons"><svg viewBox="0 0 14 14"><path d="M2 9l5-5 5 5" fill="none" stroke="#ddd" stroke-width="1.400"/></svg></button>
    <button aria-label="Battery"><svg viewBox="0 0 14 14"><path d="M3 4h9v6H3zM13 6v2" fill="none" stroke="#ddd"/><path d="M1 3h4v5H1z" fill="#ddd"/><path d="M7 6h4v2H7z" fill="#ddd"/></svg></button>
    <button aria-label="Volume"><svg viewBox="0 0 14 14"><path d="M1 5h2l3-3v10L3 9H1zM8 5q2 2 0 4M10 3.500q3 3.500 0 7" fill="none" stroke="#bbb"/></svg></button>
    <button class="db" aria-label="Dropbox status"><svg><use href="#drop"/></svg></button>
    <time><span>14:41</span><span>27/03/2020</span></time>
    <button class="note" aria-label="Notifications"><svg viewBox="0 0 14 14"><path d="M1 1h12v9H6l-2 3v-3H1z" fill="#eee"/><path d="M3 4h7M3 7h5" stroke="#444"/></svg><b>9</b></button>
    <i class="peek"></i>
  </div>
</footer>
</body>
</html>
```
FILE: styles.css
```css
* { box-sizing: border-box; }
html, body { height: 100%; margin: 0; }
body {
  display: flex;
  flex-direction: column;
  overflow: hidden;
  background: #363636;
  color: #dcdcdc;
  font-family: Lato, "Open Sans", sans-serif;
  font-size: 7px;
  line-height: 9px;
}
button, input, select {
  font: inherit;
  color: inherit;
  background: none;
  border: 0;
  margin: 0;
  padding: 0;
  min-width: 0;
  outline: 0;
}
select { appearance: none; flex: 1; height: 9px; }
a { color: inherit; text-decoration: none; }
h1, h2, p { margin: 0; font-size: inherit; font-weight: normal; }
button { display: flex; align-items: center; justify-content: center; }
svg { display: block; flex: none; width: 10px; height: 10px; }
b, i, em { display: block; flex: none; font-style: normal; }
.defs { position: absolute; width: 0; height: 0; }

.arr { border: 2px solid transparent; border-top-color: #eee; border-bottom: 0; }
.arr.wide { border-width: 3px 2px 0; }
.rarr { border: 3px solid transparent; border-left-color: #eee; border-right: 0; }
.up { border: 2px solid transparent; border-bottom: 3px solid #222; border-top: 0; }

/* title bar and menu */
.head { display: flex; height: 25px; flex: none; background: #525252; }
.app { width: 23px; height: 22px; background: linear-gradient(#a5a5a5, #5c5c5c); border: 1px solid #777; gap: 1px; }
.app svg { width: 14px; height: 16px; }
.headmain { flex: 1; min-width: 0; display: flex; flex-direction: column; }
.title { display: flex; height: 14px; }
.qat { width: 137px; display: flex; align-items: center; padding-left: 2px; background: linear-gradient(#747474, #565656); }
.qat button { width: 14px; height: 13px; }
.qat svg { width: 9px; height: 9px; }
.qat .slim { width: 7px; }
.title h1 { flex: 1; background: #fff; color: #111; display: flex; gap: 6px; justify-content: center; line-height: 13px; white-space: nowrap; padding-left: 1px; border-bottom: 1px solid #777; }
.info { display: flex; align-items: center; width: 258px; background: linear-gradient(#747474, #565656); }
.expand { width: 8px; height: 13px; }
.info input { width: 104px; height: 13px; padding-left: 2px; background: #484848; border: 1px solid #777; font-style: italic; appearance: none; }
.info input::placeholder { color: #aaa; opacity: 1; }
.info svg { width: 9px; height: 9px; }
.info button { margin-left: 3px; gap: 3px; }
.info .expand { margin: 0; }
.info .account { margin-left: 4px; }
.info .account span { width: 48px; text-align: left; }
.info .account .arr { margin-right: 2px; }
.info .helpb { border-left: 1px solid #777; padding-left: 6px; margin-left: 5px; }
.win { width: 95px; display: flex; justify-content: flex-end; background: #fff; border-bottom: 1px solid #777; padding-right: 2px; }
.win button { width: 27px; }
.win svg { width: 8px; height: 8px; }
.menu { display: flex; flex: 1; padding-left: 4px; line-height: 12px; }
.menu a { padding: 0 6px; margin-right: -1px; white-space: nowrap; color: #cfcfcf; }
.menu .on { padding: 0 4px; margin-right: 1px; background: #707070; color: #fff; border-radius: 2px 2px 0 0; }
.menu button { gap: 3px; margin-left: 11px; }
.pill { width: 8px; height: 4px; border-radius: 1px; background: #e4e4e4; border: 1px solid #999; }

/* ribbon */
.ribbon {
  display: grid;
  grid-template-columns: 128px 145px 98px 157px 45px 129px 39px 56px 46px 36px 1fr;
  height: 57px;
  flex: none;
  background: #393939;
}
.panel { display: flex; flex-direction: column; min-width: 0; background: #5b5b5b; border-right: 1px solid #474747; border-top: 1px solid #6a6a6a; }
.panel h2 { display: flex; align-items: center; justify-content: center; gap: 4px; height: 11px; background: #4c4c4c; white-space: nowrap; }
.panel h2 em { margin-left: auto; }
.props + h2 { padding-left: 30px; }
.view + h2 { padding-left: 3px; }
.tools { flex: 1; display: grid; padding-top: 1px; }
.col { display: grid; grid-template-rows: repeat(3, 14px); min-width: 0; }
.big { flex-direction: column; justify-content: flex-start; white-space: nowrap; padding-top: 1px; text-align: center; height: 42px; line-height: 9px; }
.big svg { width: 18px; height: 18px; margin-bottom: 3px; }
.big .arr { margin-top: 2px; }
.sm { justify-content: flex-start; gap: 3px; white-space: nowrap; }
.end .arr { margin-left: auto; margin-right: 4px; }
.draw { grid-template-columns: 24px 25px 32px 21px 25px; }
.draw .col { padding-left: 3px; }
.modify { grid-template-columns: 43px 41px 43px 14px; padding-left: 2px; }
.annot { grid-template-columns: 30px 32px 34px; }
.annot .col { padding-left: 3px; }
.layers { grid-template-columns: 33px 121px; padding-left: 2px; }
.layers .col { padding-left: 1px; }
.sel { background: linear-gradient(#6f94c8, #3f5d8c); border: 1px solid #83a5d3; }
.big.sel { padding-top: 0; }
.row { display: grid; grid-template-columns: repeat(4, 14px) 1fr; padding-left: 0; }
.block { grid-template-columns: 25px 18px; }
.block .col { padding-left: 1px; }
.props { grid-template-columns: 37px 91px; }
.prow { display: grid; grid-template-columns: 10px 1fr; gap: 1px; align-items: center; padding-left: 1px; }
.combo { display: flex; align-items: center; gap: 3px; height: 12px; padding: 0 2px; position: relative; background: linear-gradient(#3d3d3d, #4e4e4e); border: 1px solid #353535; }
.combo svg { width: 9px; height: 9px; }
.combo::after { content: ""; border: 2px solid transparent; border-top: 3px solid #eee; border-bottom: 0; }
.sw { width: 9px; height: 9px; background: #ff0; border: 1px solid #333; }
.props .sw { margin: 0 2px 0 3px; }
.ln { width: 34px; height: 2px; background: #999; }
.groups { grid-template-columns: 25px 13px; }
.groups .sm { justify-content: center; }
.utils { grid-template-columns: 42px 10px; }
.clipb { grid-template-columns: 32px 10px; }

/* file tabs */
.files { display: flex; height: 16px; flex: none; padding: 1px 0 0 13px; background: #353535; border-bottom: 3px solid #606060; line-height: 14px; }
.files a { display: flex; align-items: center; height: 14px; padding: 0 5px; }
.files .start { width: 71px; background: #494949; border-radius: 7px 7px 0 0; color: #aaa; }
.files .on { width: 71px; justify-content: space-between; padding-right: 7px; background: #606060; border-radius: 7px 7px 0 0; color: #fff; }
.files .on svg { width: 5px; height: 5px; }
.files button { width: 13px; height: 10px; margin: 2px 0 0 3px; background: #5a5a5a; border-radius: 3px; font-weight: bold; font-size: 8px; }

/* workspace */
.work { flex: 1; display: flex; min-height: 0; }
.dock { width: 14px; padding: 4px 2px 4px 1px; background: #565656; }
.dock span { display: flex; align-items: center; justify-content: center; height: 100%; width: 10px; writing-mode: vertical-rl; transform: rotate(180deg); background: linear-gradient(90deg, #767676, #8a8a8a); color: #f4f4f4; white-space: nowrap; }
.canvas { flex: 1; position: relative; overflow: hidden; background: #212830; }
.drawing { width: 100%; height: 100%; }
.viewlabel { position: absolute; left: 2px; top: 4px; color: #e8e8e8; }
.docwin { position: absolute; right: 5px; top: 4px; display: flex; gap: 3px; }
.docwin svg { width: 8px; height: 8px; }
.cube { position: absolute; right: 6px; top: 35px; width: 68px; height: 52px; }
.wcs { position: absolute; right: 28px; top: 98px; width: 26px; height: 9px; gap: 3px; background: #a0a4af; border-radius: 2px; color: #5f646e; }
.wcs .arr { border-top-color: #c6c9d0; }
.navbar { position: absolute; right: 1px; top: 121px; width: 19px; height: 120px; }
.command { position: absolute; left: 50%; bottom: 0; width: 246px; margin-left: -123px; display: flex; flex-direction: column; gap: 2px; font-family: "DejaVu Sans Mono", monospace; }
.command p { padding-left: 34px; height: 9px; color: #6e7378; }
.command p span { display: inline-block; height: 9px; background: #2d333a; padding-right: 1px; }
.cmdline { display: flex; height: 15px; background: #4b4b4b; align-items: center; }
.cmdline > button { width: 13px; }
.cmdline svg { width: 8px; height: 8px; }
.grip { width: 4px; height: 11px; margin: 0 1px; background: repeating-linear-gradient(#777 0 1px, #505050 1px 2px); }
.entry { flex: 1; display: flex; align-items: center; gap: 2px; height: 15px; padding: 0 3px 0 2px; background: #bfc1c4; }
.entry .arr { border-top-color: #333; }
.entry input { flex: 1; font-style: italic; }
.entry input::placeholder { color: #666; opacity: 1; }
.prompt { width: 10px; height: 9px; background: #94999f; color: #222; border-radius: 1px; }

/* layout tabs and status */
.bottom { flex: none; height: 28px; border-top: 2px solid #4c4c4c; background: #363636; }
.layouts { display: flex; gap: 1px; height: 10px; padding-left: 7px; line-height: 9px; }
.layouts a { padding: 0 6px; min-width: 36px; text-align: center; color: #b8b8b8; background: #505050; border-radius: 0 0 5px 5px; }
.layouts .on { min-width: 32px; background: #757575; color: #fff; font-weight: bold; padding: 0 5px; }
.layouts button { width: 13px; background: #505050; border-radius: 0 0 5px 5px; font-weight: bold; }
.status { display: flex; width: 354px; height: 15px; margin: 1px 0 0 auto; background: #505050; border: 1px solid #6c6c6c; border-right: 0; color: #c4c4c4; }
.status svg { width: 10px; height: 10px; }
.status button { width: 14px; }
.status .slim { width: 9px; }
.status .model { width: 28px; font-weight: bold; color: #fff; }
.seg { display: flex; border-left: 1px solid #737373; flex: auto; justify-content: center; }
.status .act { color: #3d86e6; }
.status .dim { color: #858585; }
.status .ratio { width: 20px; gap: 2px; color: #fff; }

/* taskbar */
.taskbar { display: flex; flex: none; height: 23px; background: linear-gradient(90deg, #1c1c1c 50%, #241c1b 60%, #30211e 74%, #23242a 80%, #20232b); color: #eee; }
.winkey { width: 28px; }
.search { width: 198px; display: flex; align-items: center; gap: 6px; padding-left: 7px; background: #f2f2f2; color: #333; font-size: 9px; line-height: 12px; }
.search input { flex: 1; }
.search input::placeholder { color: #444; opacity: 1; }
.apps { display: grid; grid-template-columns: repeat(10, 1fr); width: 286px; }
.apps svg { width: 14px; height: 14px; }
.apps button { border-bottom: 2px solid transparent; border-top: 2px solid transparent; }
.apps .open { border-bottom-color: #e6b4be; margin: 0 2px; }
.apps .now { background: #4a4a4c; border-top-color: #4a4a4c; margin: 0; }
.tray { margin-left: auto; display: flex; align-items: center; }
.tray svg { width: 10px; height: 10px; }
.tray > button { width: 14px; }
.tray > button:first-child { margin-right: 2px; }
.tray > button:first-child svg { width: 14px; height: 14px; }
.tray time { width: 44px; display: flex; flex-direction: column; align-items: center; line-height: 10px; color: #fff; }
.tray .note { position: relative; margin-left: 6px; height: 14px; }
.note svg { width: 12px; height: 12px; }
.note b { position: absolute; right: -2px; bottom: -1px; width: 8px; height: 8px; line-height: 8px; border-radius: 4px; background: #555; color: #fff; }
.peek { width: 1px; height: 23px; background: #666; margin: 0 2px 0 6px; }
```
